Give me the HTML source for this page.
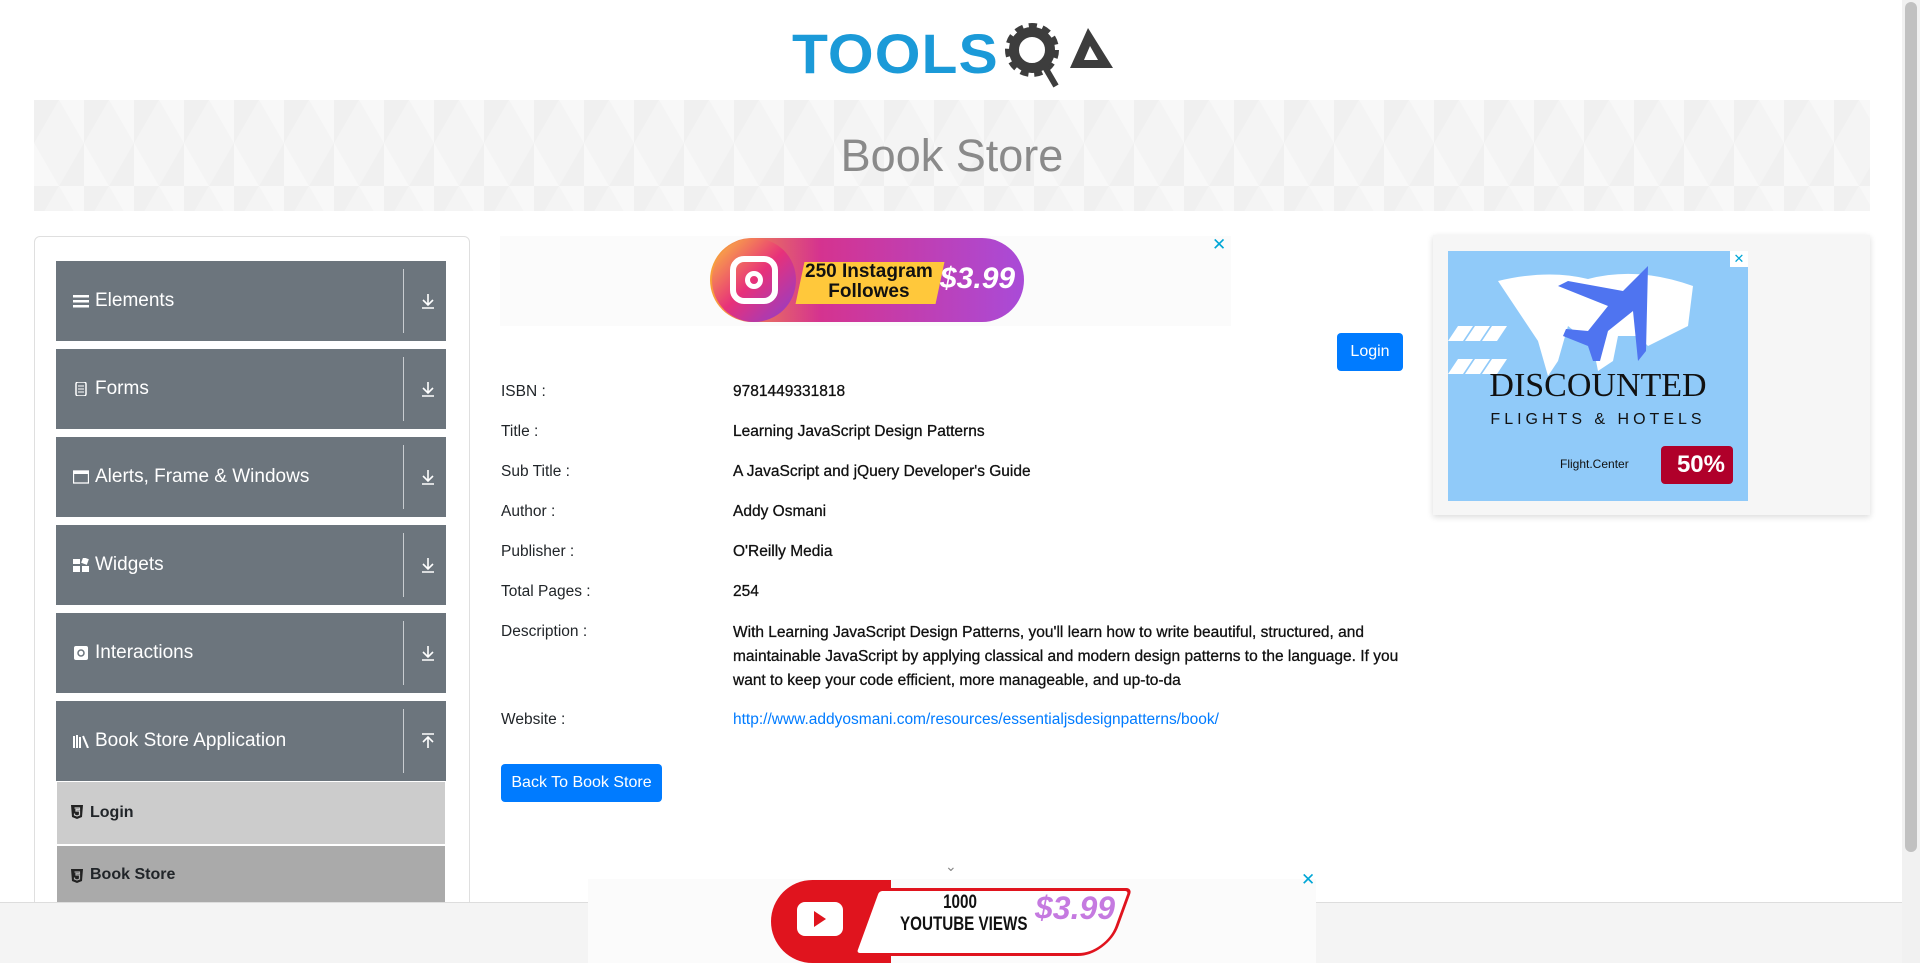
<!DOCTYPE html>
<html><head><meta charset="utf-8"><style>
*{box-sizing:border-box;margin:0;padding:0}
body{width:1920px;height:963px;overflow:hidden;background:#fff;font-family:"Liberation Sans",sans-serif;color:#212529;position:relative}
.abs{position:absolute}
.banner{left:34px;top:100px;width:1836px;height:111px;background:#f4f4f4;background-image:linear-gradient(60deg,rgba(255,255,255,.35) 25%,transparent 25%,transparent 75%,rgba(255,255,255,.35) 75%),linear-gradient(-60deg,rgba(232,232,232,.35) 25%,transparent 25%,transparent 75%,rgba(232,232,232,.35) 75%);background-size:50px 86px}
.banner h1{font-weight:300;font-size:45px;color:#8a8a8a;text-align:center;line-height:111px;font-family:"Liberation Sans",sans-serif}
.card{left:34px;top:236px;width:436px;height:700px;border:1px solid #dfdfdf;border-radius:6px}
.grp{left:56px;width:390px;height:80px;background:#6c757d;color:#fff;font-size:19px}
.grp .t{position:absolute;left:39px;top:0;line-height:80px}
.grp .ic{position:absolute;left:17px;top:33px;width:16px;height:14px}
.grp .sep{position:absolute;left:347px;top:8px;width:1px;height:64px;background:#c8ccd0}
.grp .ar{position:absolute;left:365px;top:32px;width:14px;height:16px}
.item{left:57px;width:388px;font-weight:bold;font-size:16px;padding-left:33px}
.lbl{left:501px;font-size:15.5px;color:#212529}
.val{left:733px;font-size:15.5px;color:#111;-webkit-text-stroke:0.3px #111}
.btn{background:#007bff;color:#fff;border-radius:4px;font-size:16px;text-align:center}
</style></head><body>
<div class="abs" style="left:792px;top:16px;width:330px;height:75px">
<div class="abs" style="left:0;top:10px;font-size:56px;font-weight:bold;color:#1b9ad8;letter-spacing:1px;font-family:'Liberation Sans',sans-serif;transform:scaleX(1.05);transform-origin:left;line-height:56px">TOOLS</div>
<svg class="abs" style="left:208px;top:0" width="120" height="75" viewBox="0 0 120 75">
<circle cx="32" cy="34" r="21" fill="none" stroke="#3d3d3d" stroke-width="12" stroke-dasharray="7 5"/>
<circle cx="32" cy="34" r="18" fill="none" stroke="#3d3d3d" stroke-width="10"/>
<line x1="42" y1="46" x2="56" y2="70" stroke="#3d3d3d" stroke-width="6"/>
<path d="M70 52 L88 12 L113 52 Z M84 44 L90 30 L98 44 Z" fill="#3d3d3d" fill-rule="evenodd"/>
</svg></div>
<div class="abs banner"><h1>Book Store</h1></div>
<div class="abs card"></div>
<svg width="0" height="0" style="position:absolute"><defs>
<g id="dn"><path d="M7 1v10M2 7l5 5 5-5M1 15h12" stroke="#fff" stroke-width="1.6" fill="none"/></g>
<g id="up"><path d="M7 15V5M2 9l5-5 5 5M1 1h12" stroke="#fff" stroke-width="1.6" fill="none"/></g>
</defs></svg>
<div class="abs grp" style="top:261px"><svg class="ic" viewBox="0 0 16 14"><rect y="1" width="16" height="2.5" fill="#fff"/><rect y="6" width="16" height="2.5" fill="#fff"/><rect y="11" width="16" height="2.5" fill="#fff"/></svg><span class="t">Elements</span><i class="sep"></i><svg class="ar" viewBox="0 0 14 16"><use href="#dn"/></svg></div>
<div class="abs grp" style="top:349px"><svg class="ic" viewBox="0 0 16 14"><rect x="3" y="0" width="10" height="14" rx="2" fill="none" stroke="#fff" stroke-width="1.5"/><path d="M5 4h6M5 7h6M5 10h6" stroke="#fff"/></svg><span class="t">Forms</span><i class="sep"></i><svg class="ar" viewBox="0 0 14 16"><use href="#dn"/></svg></div>
<div class="abs grp" style="top:437px"><svg class="ic" viewBox="0 0 16 14"><rect x="0.5" y="1" width="15" height="12" fill="none" stroke="#fff" stroke-width="1.3"/><rect x="0.5" y="1" width="15" height="3" fill="#fff"/></svg><span class="t">Alerts, Frame &amp; Windows</span><i class="sep"></i><svg class="ar" viewBox="0 0 14 16"><use href="#dn"/></svg></div>
<div class="abs grp" style="top:525px"><svg class="ic" viewBox="0 0 16 14"><rect x="0" y="1" width="7" height="5" fill="#fff"/><rect x="9" y="0" width="6" height="6" fill="#fff" transform="rotate(20 12 3)"/><rect x="0" y="8" width="7" height="6" fill="#fff"/><rect x="9" y="8" width="7" height="6" fill="#fff"/></svg><span class="t">Widgets</span><i class="sep"></i><svg class="ar" viewBox="0 0 14 16"><use href="#dn"/></svg></div>
<div class="abs grp" style="top:613px"><svg class="ic" viewBox="0 0 16 14"><rect x="1" y="0" width="14" height="14" rx="2" fill="#fff"/><path d="M5 7a3 3 0 0 1 6 0M11 7a3 3 0 0 1-6 0" stroke="#6c757d" stroke-width="1.5" fill="none"/></svg><span class="t">Interactions</span><i class="sep"></i><svg class="ar" viewBox="0 0 14 16"><use href="#dn"/></svg></div>
<div class="abs grp" style="top:701px"><svg class="ic" viewBox="0 0 16 14"><path d="M1 2v12M4 1v13M7 3v11M10 2l5 12" stroke="#fff" stroke-width="2"/></svg><span class="t">Book Store Application</span><i class="sep"></i><svg class="ar" viewBox="0 0 14 16"><use href="#up"/></svg></div>
<div class="abs item" style="top:782px;height:62px;line-height:62px;background:#ccc">Login</div>
<div class="abs item" style="top:846px;height:57px;line-height:57px;background:#aaa">Book Store</div>
<svg class="abs" style="left:71px;top:805px" width="12" height="14" viewBox="0 0 12 14"><path d="M0 0h12l-1 12-5 2-5-2z" fill="#222"/><path d="M3.5 3h5v1.5h-3.5v1.5h3.5v4l-2.5 1-2.5-1v-1.5" stroke="#ccc" fill="none" stroke-width="1.2"/></svg>
<svg class="abs" style="left:71px;top:869px" width="12" height="14" viewBox="0 0 12 14"><path d="M0 0h12l-1 12-5 2-5-2z" fill="#222"/><path d="M3.5 3h5v1.5h-3.5v1.5h3.5v4l-2.5 1-2.5-1v-1.5" stroke="#aaa" fill="none" stroke-width="1.2"/></svg>
<!-- top ad -->
<div class="abs" style="left:500px;top:236px;width:731px;height:90px;background:#fbfbfb"></div>
<div class="abs" style="left:710px;top:238px;width:314px;height:84px;border-radius:42px;background:linear-gradient(90deg,#f9a23a,#d5338f 35%,#a94bd8)"></div>
<div class="abs" style="left:712px;top:238px;width:84px;height:84px;border-radius:50%;background:linear-gradient(135deg,#fec43a,#e7317a,#8a3fd0)"></div>
<div class="abs" style="left:730px;top:256px;width:48px;height:48px;border:6px solid #fff;border-radius:14px"></div>
<div class="abs" style="left:745px;top:271px;width:18px;height:18px;border:5px solid #fff;border-radius:50%"></div>
<div class="abs" style="left:800px;top:262px;width:140px;height:42px;background:#ffc83b;transform:skewX(-12deg)"></div>
<div class="abs" style="left:805px;top:262px;font-weight:bold;font-size:19px;line-height:20px;text-align:center;color:#111">250 Instagram<br>Followes</div>
<div class="abs" style="left:940px;top:262px;font-weight:bold;font-size:30px;color:#fff;font-style:italic">$3.99</div>
<div class="abs" style="left:1212px;top:235px;color:#00a6d6;font-size:17px">✕</div>
<div class="abs btn" style="left:1337px;top:333px;width:66px;height:38px;line-height:38px">Login</div>
<div class="abs lbl" style="top:383px">ISBN :</div><div class="abs val" style="top:383px">9781449331818</div>
<div class="abs lbl" style="top:423px">Title :</div><div class="abs val" style="top:423px">Learning JavaScript Design Patterns</div>
<div class="abs lbl" style="top:463px">Sub Title :</div><div class="abs val" style="top:463px">A JavaScript and jQuery Developer's Guide</div>
<div class="abs lbl" style="top:503px">Author :</div><div class="abs val" style="top:503px">Addy Osmani</div>
<div class="abs lbl" style="top:543px">Publisher :</div><div class="abs val" style="top:543px">O'Reilly Media</div>
<div class="abs lbl" style="top:583px">Total Pages :</div><div class="abs val" style="top:583px">254</div>
<div class="abs lbl" style="top:623px">Description :</div><div class="abs val" style="top:621px;width:668px;line-height:24px">With Learning JavaScript Design Patterns, you'll learn how to write beautiful, structured, and maintainable JavaScript by applying classical and modern design patterns to the language. If you want to keep your code efficient, more manageable, and up-to-da</div>
<div class="abs lbl" style="top:711px">Website :</div><div class="abs val" style="top:711px;color:#007bff;-webkit-text-stroke:0">http://www.addyosmani.com/resources/essentialjsdesignpatterns/book/</div>
<div class="abs btn" style="left:501px;top:764px;width:161px;height:38px;line-height:38px">Back To Book Store</div>
<!-- right ad -->
<div class="abs" style="left:1433px;top:235px;width:437px;height:280px;background:#f6f6f6;box-shadow:0 2px 6px rgba(0,0,0,.15)"></div>
<div class="abs" style="left:1448px;top:251px;width:300px;height:250px;background:#90caf9;overflow:hidden">
<svg class="abs" style="left:0;top:0" width="300" height="250"><path d="M50 30 Q100 18 140 28 Q190 15 245 35 L240 75 L200 95 L190 85 L170 85 L165 110 L150 120 L145 95 L120 75 L110 110 L100 125 L90 90 L70 60 Z" fill="#fff"/><path d="M200 15 L175 40 L120 30 L110 35 L160 55 L140 80 L118 78 L115 85 L140 95 L145 110 L152 110 L160 80 L185 60 L190 110 L198 100 Z" fill="#4f74f0"/><g fill="#fff"><path d="M10 75h15l-10 15h-15zM27 75h15l-10 15h-15zM44 75h15l-10 15h-15zM10 108h15l-10 15h-15zM27 108h15l-10 15h-15zM44 108h15l-10 15h-15z"/></g></svg>
<div class="abs" style="left:0;width:300px;top:116px;text-align:center;font-family:'Liberation Serif',serif;font-size:34px;color:#111">DISCOUNTED</div>
<div class="abs" style="left:0;width:300px;top:160px;text-align:center;font-size:16px;letter-spacing:4px;color:#111">FLIGHTS &amp; HOTELS</div>
<div class="abs" style="left:112px;top:206px;font-size:12px;color:#111">Flight.Center</div>
<div class="abs" style="left:213px;top:195px;width:72px;height:38px;background:#b0002a;border-radius:4px;color:#fff;font-weight:bold;font-size:24px;line-height:38px;text-align:right;padding-right:8px">50%</div>
<div class="abs" style="left:282px;top:0;width:18px;height:16px;background:#fff;color:#00a6d6;font-size:13px;text-align:center">✕</div>
</div>
<!-- bottom bar -->
<div class="abs" style="left:0;top:902px;width:1902px;height:61px;background:#f4f4f4;border-top:1px solid #ddd"></div>
<div class="abs" style="left:945px;top:858px;color:#888;font-size:14px">⌄</div>
<div class="abs" style="left:588px;top:879px;width:728px;height:84px;background:#fbfbfb"></div>
<div class="abs" style="left:771px;top:880px;width:120px;height:83px;background:#e0141e;border-radius:60px 0 0 60px"></div>
<div class="abs" style="left:797px;top:902px;width:46px;height:34px;background:#fff;border-radius:8px"></div>
<div class="abs" style="left:814px;top:911px;width:0;height:0;border-left:12px solid #e0141e;border-top:8px solid transparent;border-bottom:8px solid transparent"></div>
<div class="abs" style="left:865px;top:888px;width:255px;height:68px;border:3px solid #e0141e;border-radius:6px 6px 30px 6px;transform:skewX(-20deg);background:#fff"></div>
<div class="abs" style="left:885px;top:892px;width:150px;text-align:center;font-weight:bold;font-size:19px;line-height:22px;color:#111;transform:scaleX(.8);white-space:nowrap">1000<br>YOUTUBE VIEWS</div>
<div class="abs" style="left:1035px;top:890px;font-weight:bold;font-size:32px;color:#c57ae0;font-style:italic">$3.99</div>
<div class="abs" style="left:1301px;top:870px;color:#00a6d6;font-size:17px">✕</div>
<!-- scrollbar -->
<div class="abs" style="left:1902px;top:0;width:18px;height:963px;background:#f1f1f1"></div>
<div class="abs" style="left:1905px;top:2px;width:12px;height:850px;background:#c1c1c1;border-radius:6px"></div>
</body></html>
